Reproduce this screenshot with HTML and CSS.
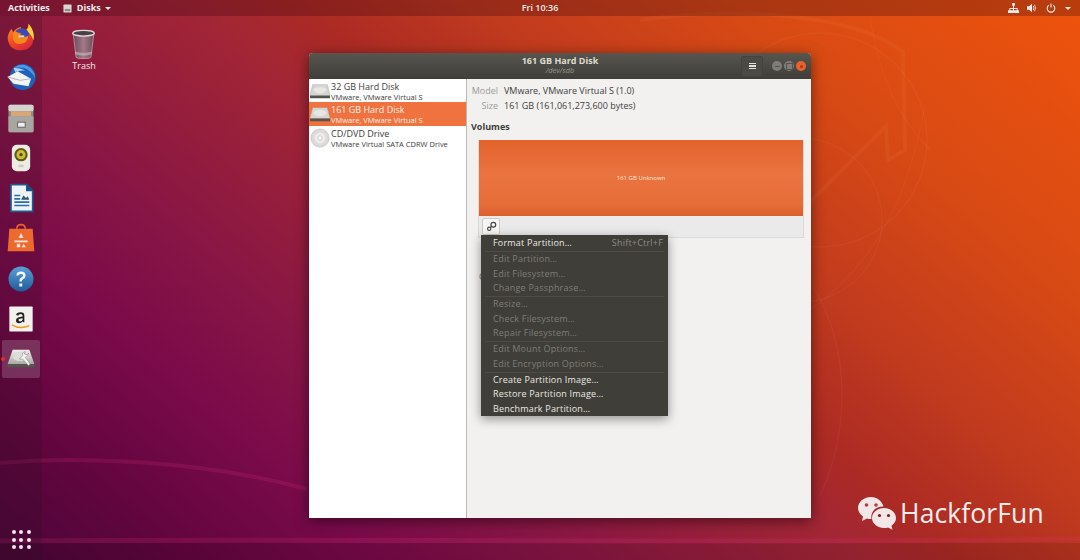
FILE: index.html
```html
<!DOCTYPE html>
<html lang="en">
<head>
<meta charset="utf-8">
<title>Disks</title>
<link rel="stylesheet" href="styles.css">
</head>
<body>
<div class="desktop">
  <svg class="wallpaper" viewBox="0 0 1080 560" preserveAspectRatio="none" aria-hidden="true">
    <rect x="0" y="543" width="1080" height="17" fill="#000" fill-opacity=".1"/>
    <g fill="none" stroke="#fff">
      <path d="M640 20 C720 8 850 10 903 52 L905 150 L888 160 L886 126 L812 200 L790 232" stroke="#f6a060" stroke-opacity=".09" stroke-width="4"/>
      <circle cx="820" cy="140" r="107" stroke-opacity=".04" stroke-width="1.500"/>
      <circle cx="800" cy="220" r="82" stroke-opacity=".035" stroke-width="1.500"/>
      <path d="M870 16 C880 80 900 120 930 150 M810 310 C880 260 910 190 925 105" stroke-opacity=".035" stroke-width="1.200"/>
      <path d="M815 290 C850 350 850 430 820 496" stroke-opacity=".035" stroke-width="1.500"/>
      <path d="M0 463 C80 456 200 460 307 489" stroke="#e0307a" stroke-opacity=".18" stroke-width="4"/>
      <path d="M0 541 C300 538 700 544 1080 539" stroke="#e0307a" stroke-opacity=".18" stroke-width="5"/>
    </g>
  </svg>

  <header class="topbar">
    <div class="topbar-left">
      <span>Activities</span>
      <span class="appmenu">
        <svg class="appmenu-icon" viewBox="0 0 10 10"><rect x=".5" y=".5" width="9" height="9" rx="1" fill="#d9d6d2"/><rect x="2" y="5.500" width="6" height="2.500" fill="#8f8b86"/></svg>
        Disks
        <i class="caret"></i>
      </span>
    </div>
    <div class="clock">Fri 10:36</div>
    <div class="status">
      <svg class="status-icon net" viewBox="0 0 12 12"><path fill="#eee" d="M4.500 0h3v3h-3zM5.500 3h1v2.500h4V8h1.500v3h-4V8h1.500V6.500H6.500V8H8v3H4V8h1.500V6.500H2.500V8H4v3H0V8h1.500V5.500h4z"/></svg>
      <svg class="status-icon" viewBox="0 0 12 12"><path fill="#eee" d="M0 4h2.500L6 1v10L2.500 8H0z"/><path fill="none" stroke="#eee" d="M7.500 3.500q1.500 2.500 0 5M9 2q2.500 4 0 8"/></svg>
      <svg class="status-icon power" viewBox="0 0 12 12"><path fill="none" stroke="#eee" stroke-width="1.300" d="M3.500 2.500a4.600 4.600 0 1 0 5 0M6 .5v5"/></svg>
      <i class="caret"></i>
    </div>
  </header>

  <aside class="dock">
    <div class="launcher">
      <svg class="dock-icon" viewBox="0 0 36 36"><defs><linearGradient id="fx" x1="0" y1="0" x2=".6" y2="1"><stop offset="0" stop-color="#ff9a2a"/><stop offset=".6" stop-color="#f2481f"/><stop offset="1" stop-color="#d92b3a"/></linearGradient></defs><path d="M27 2 q7 8 6 18 q-1 13 -15 14 q-14 0 -16 -14 q0 -7 5 -12 q0 3 2 4 q3 -5 9 -6 q-1 3 3 4 q5 1 6 -8z" fill="url(#fx)"/><path d="M27 2 q8 9 6 20 q-3 -8 -9 -12 q4 -3 3 -8z" fill="#ffd335"/><circle cx="19" cy="16" r="8.500" fill="#3b48b8"/><path d="M10 11 q6 2 9 3 q-3 2 -4 3 q2 2 6 1.500 q4 -1 6 -2 q-1 9 -10 10 q-8 0 -9 -8 q0 -5 2 -7.500z" fill="#f7861f"/><path d="M15 16h7v2.500h-7z" fill="#f9d8a0"/></svg>
    </div>
    <div class="launcher">
      <svg class="dock-icon" viewBox="0 0 36 36"><circle cx="20" cy="18" r="15.500" fill="#1c62bb"/><path d="M9 7 q12 -8 22 2 q4 5 4 10 q-6 -10 -14 -12 q-6 -1 -12 0z" fill="#4f9be3"/><path d="M9 7 q8 0 14 3 q-6 0 -12 2z" fill="#a9d2f4"/><path d="M2 18 L14 11 L30 20 L27 29 L9 26z" fill="#f4f4f4"/><path d="M2 18 L17 22 L30 20" fill="none" stroke="#b3b8c2" stroke-width="1.200"/></svg>
    </div>
    <div class="launcher">
      <svg class="dock-icon" viewBox="0 0 36 36"><rect x="3" y="2" width="30" height="33" rx="2" fill="#8d8a86"/><rect x="3" y="2" width="30" height="8" rx="2" fill="#d5d3cf"/><rect x="6" y="10" width="24" height="6" fill="#d8a778"/><rect x="3" y="16" width="30" height="19" rx="1" fill="#a9a6a2"/><rect x="14" y="23" width="9" height="6" fill="#efefef" stroke="#55524f"/></svg>
    </div>
    <div class="launcher">
      <svg class="dock-icon" viewBox="0 0 36 36"><rect x="7" y="2" width="22" height="32" rx="6" fill="#eeebe3"/><circle cx="18" cy="14" r="8" fill="#5e5a18"/><circle cx="18" cy="14" r="5.500" fill="#cdbb34"/><circle cx="18" cy="14" r="2" fill="#4e4a12"/><rect x="15" y="26" width="6" height="3" fill="#cfccc2"/></svg>
    </div>
    <div class="launcher">
      <svg class="dock-icon" viewBox="0 0 36 36"><path d="M5 1h20l8 8v26H5z" fill="#1d5c8f"/><path d="M7 3h17v7h7v23H7z" fill="#eef3f7"/><path d="M25 1l8 8h-8z" fill="#1a4f7c"/><path d="M10 14h7v2h-7zM10 18h7v2h-7zM10 22h18v2h-18zM10 26h18v2h-18z" fill="#2a6ea6"/><path d="M18 20l3-5 3 3 2-2 2 4z" fill="#33566f"/></svg>
    </div>
    <div class="launcher">
      <svg class="dock-icon" viewBox="0 0 36 36"><path d="M13 7q0-5 5-5t5 5" fill="none" stroke="#e8602c" stroke-width="2"/><path d="M4 7h28l2 27H2z" fill="#ed6a2f"/><path d="M18 12l3 6h-6zM10 21h16v2H10zM13 25h4v4h-4zM21 25l3 4h-5z" fill="#f8e4da"/></svg>
    </div>
    <div class="launcher">
      <svg class="dock-icon" viewBox="0 0 36 36"><defs><linearGradient id="hb" x1="0" y1="0" x2="0" y2="1"><stop offset="0" stop-color="#5aa0d8"/><stop offset="1" stop-color="#1f5c99"/></linearGradient></defs><circle cx="18" cy="18" r="15" fill="url(#hb)"/><path d="M12.500 14q0-5 5.500-5t5.500 5q0 3-3.500 4.500q-1 .6-1 2.500h-3q0-4 2.500-5q2-1 2-2.300q0-1.700-2.500-1.700t-2.500 1.500zM16 23.500h3.500V27H16z" fill="#f4f7fb"/></svg>
    </div>
    <div class="launcher">
      <svg class="dock-icon" viewBox="0 0 36 36"><rect x="4" y="3" width="28" height="30" rx="1" fill="#f2f1ee"/><path d="M22 22V14q0-4-4.500-4T12 13l2.500 1q.5-2 3-2t2.500 2v1q-8 .5-8 4.500q0 3.500 3.500 3.500q3 0 4.500-2l1 1z M20 17v2q-1 2-3 2t-2-2q0-2 5-2z" fill="#23211f"/><path d="M7 25q10 6 21 1" fill="none" stroke="#f39a1f" stroke-width="1.800"/></svg>
    </div>
    <div class="launcher is-active">
      <span class="running-dot"></span>
      <svg class="dock-icon" viewBox="0 0 36 36"><defs><linearGradient id="dk" x1="0" y1="0" x2="0" y2="1"><stop offset="0" stop-color="#f0efec"/><stop offset="1" stop-color="#a9a8a4"/></linearGradient></defs><path d="M8 7h20l6 17H2z" fill="url(#dk)"/><path d="M2 24h32v4H2z" fill="#55544f"/><ellipse cx="17" cy="15" rx="9" ry="5.500" fill="#dddcd8"/><path d="M16 18l4-4q-1-4 3-5l-1 3 3 1 2-2q0 4-4 5l6 8-2 2-7-8z" fill="#f6f5f3" stroke="#777" stroke-width=".6"/></svg>
    </div>
    <div class="dock-spacer"></div>
    <div class="app-grid">
      <i></i><i></i><i></i><i></i><i></i><i></i><i></i><i></i><i></i>
    </div>
  </aside>

  <div class="desktop-item">
    <svg class="trash" viewBox="0 0 26 32"><defs><linearGradient id="tb" x1="0" y1="0" x2="1" y2="0"><stop offset="0" stop-color="#6d4a58"/><stop offset=".5" stop-color="#a27a88"/><stop offset="1" stop-color="#6f4b5a"/></linearGradient></defs><path d="M2 5l3 25q0 1.500 8 1.500t8-1.500l3-25z" fill="url(#tb)" stroke="#cfc8ca" stroke-width=".6"/><ellipse cx="13" cy="4.500" rx="11.500" ry="3" fill="#4a4046" stroke="#e1dddd" stroke-width="1.400"/><path d="M4 24q9 3 18 0v3q-9 3-18 0z" fill="#c8bcc0" opacity=".6"/></svg>
    <span>Trash</span>
  </div>

  <section class="window">
    <div class="titlebar">
      <div class="title">
        <strong>161 GB Hard Disk</strong>
        <em>/dev/sdb</em>
      </div>
      <div class="title-actions">
        <button class="hamburger" type="button"><i></i><i></i><i></i></button>
        <div class="wm-buttons">
          <b class="wm wm-min"></b><b class="wm wm-max"></b><b class="wm wm-close"></b>
        </div>
      </div>
    </div>
    <div class="window-body">
      <nav class="sidebar">
        <div class="disk">
          <svg class="disk-icon" viewBox="0 0 22 18"><path d="M3 2h16l3 12H0z" fill="#d6d5d2" stroke="#a3a29f" stroke-width=".5"/><path d="M0 14h22v3H0z" fill="#55544f"/><ellipse cx="11" cy="8" rx="7" ry="3.500" fill="#e8e7e4"/></svg>
          <div class="disk-text"><span class="disk-name">32 GB Hard Disk</span><span class="disk-sub">VMware, VMware Virtual S</span></div>
        </div>
        <div class="disk is-selected">
          <svg class="disk-icon" viewBox="0 0 22 18"><path d="M3 2h16l3 12H0z" fill="#d6d5d2" stroke="#a3a29f" stroke-width=".5"/><path d="M0 14h22v3H0z" fill="#55544f"/><ellipse cx="11" cy="8" rx="7" ry="3.500" fill="#e8e7e4"/></svg>
          <div class="disk-text"><span class="disk-name">161 GB Hard Disk</span><span class="disk-sub">VMware, VMware Virtual S</span></div>
        </div>
        <div class="disk">
          <svg class="disk-icon" viewBox="0 0 22 22"><circle cx="11" cy="11" r="10" fill="#dcdbd8" stroke="#b5b4b1" stroke-width=".6"/><circle cx="11" cy="11" r="6" fill="#eeedeb"/><circle cx="11" cy="11" r="2.500" fill="#fff" stroke="#aaa" stroke-width=".6"/></svg>
          <div class="disk-text"><span class="disk-name">CD/DVD Drive</span><span class="disk-sub">VMware Virtual SATA CDRW Drive</span></div>
        </div>
      </nav>
      <main class="details">
        <dl class="props">
          <dt>Model</dt><dd>VMware, VMware Virtual S (1.0)</dd>
          <dt>Size</dt><dd>161 GB (161,061,273,600 bytes)</dd>
        </dl>
        <h2 class="volumes-title">Volumes</h2>
        <div class="volumes">
          <div class="partition"><span>161 GB Unknown</span></div>
          <div class="vol-toolbar">
            <button class="gear-btn" type="button">
              <svg viewBox="0 0 12 12"><circle cx="8" cy="4" r="2.600" fill="none" stroke="#444" stroke-width="1.300"/><circle cx="3.500" cy="8.500" r="1.800" fill="none" stroke="#444" stroke-width="1.200"/><path d="M6 6L5 7" stroke="#444" stroke-width="1.300"/></svg>
            </button>
          </div>
        </div>
        <div class="contents-label">Contents</div>
        <div class="menu">
          <div class="menu-item"><span>Format Partition…</span><span class="shortcut">Shift+Ctrl+F</span></div>
          <hr>
          <div class="menu-item is-disabled">Edit Partition…</div>
          <div class="menu-item is-disabled">Edit Filesystem…</div>
          <div class="menu-item is-disabled">Change Passphrase…</div>
          <hr>
          <div class="menu-item is-disabled">Resize…</div>
          <div class="menu-item is-disabled">Check Filesystem…</div>
          <div class="menu-item is-disabled">Repair Filesystem…</div>
          <hr>
          <div class="menu-item is-disabled">Edit Mount Options…</div>
          <div class="menu-item is-disabled">Edit Encryption Options…</div>
          <hr>
          <div class="menu-item">Create Partition Image…</div>
          <div class="menu-item">Restore Partition Image…</div>
          <div class="menu-item">Benchmark Partition…</div>
        </div>
      </main>
    </div>
  </section>

  <div class="watermark">
    <svg class="wechat" viewBox="0 0 40 34"><path d="M14 1C6.500 1 1 6 1 12c0 3.500 2 6.500 5 8.500L5 25l5-2.500c1.500.4 3 .6 4.500.5C13 16 19 10 26.500 10.500 25 5 20 1 14 1z" fill="#f3e6e6"/><path d="M27 12c-6.500 0-12 4.500-12 10s5.500 10 12 10c1.500 0 2.700-.2 4-.6l4.500 2.300-1-4c2.800-2 4.500-4.700 4.500-7.700 0-5.500-5.500-10-12-10z" fill="#f3e6e6"/><circle cx="9.500" cy="9" r="1.800" fill="#b93a3a"/><circle cx="19" cy="9" r="1.800" fill="#b93a3a"/><circle cx="22.500" cy="19.500" r="1.600" fill="#7a2020"/><circle cx="31.500" cy="19.500" r="1.600" fill="#7a2020"/></svg>
    <span>HackforFun</span>
  </div>
</div>
</body>
</html>
```
FILE: styles.css
```css
* { box-sizing: border-box; }
html, body { margin: 0; height: 100%; overflow: hidden; }
body { font-family: "Open Sans", "Noto Sans", sans-serif; color: #3d3d3a; }

.desktop {
  position: relative;
  width: 1080px;
  height: 560px;
  overflow: hidden;
  background: linear-gradient(40deg,
    #4a0638 0%, #62053f 11%, #7a0a4a 22%, #871545 32%,
    #a32634 49.500%, #ab2a24 55%, #c03a1e 65%, #d84a14 80%, #ee530c 100%);
}
.wallpaper { position: absolute; inset: 0; width: 100%; height: 100%; }

/* top bar */
.topbar {
  position: relative;
  height: 16px;
  padding: 0 8px;
  display: grid;
  grid-template-columns: 1fr auto 1fr;
  align-items: center;
  background: rgba(50, 5, 15, .28);
  color: #eee;
  font-size: 9px;
  font-weight: 700;
  line-height: 16px;
  z-index: 2;
}
.topbar-left { display: flex; gap: 13px; }
.appmenu { display: inline-flex; align-items: center; gap: 4px; }
.appmenu-icon { width: 9px; height: 9px; margin-right: 1px; }
.clock { font-weight: 600; }
.status { justify-self: end; display: flex; align-items: center; gap: 8px; padding-right: 1px; }
.status-icon { width: 10px; height: 10px; }
.net { width: 11px; height: 11px; }
.power { margin-left: 1px; margin-right: 1px; }
.caret {
  display: inline-block;
  width: 0; height: 0;
  border: 3px solid transparent;
  border-top: 3.500px solid #eee;
  border-bottom: 0;
}

/* dock */
.dock {
  position: absolute;
  top: 16px;
  bottom: 0;
  left: 0;
  width: 42px;
  display: flex;
  flex-direction: column;
  align-items: center;
  padding-top: 2px;
  background: rgba(40, 15, 30, .2);
}
.launcher {
  position: relative;
  width: 38px;
  height: 38px;
  margin-bottom: 2.300px;
  flex: none;
  display: flex;
  align-items: center;
  justify-content: center;
}
.is-active { background: rgba(255, 255, 255, .17); border-radius: 2px; }
.running-dot {
  position: absolute;
  left: -1px; top: 17px;
  width: 4px; height: 4px;
  border-radius: 50%;
  background: #e0302a;
}
.dock-icon { width: 30px; height: 30px; display: block; }
.dock-spacer { flex: 1; }
.app-grid {
  display: grid;
  grid-template-columns: repeat(3, 4px);
  gap: 3.500px;
  margin-bottom: 11px;
}
.app-grid i { width: 4px; height: 4px; border-radius: 50%; background: #f6e4f0; }

/* desktop icon */
.desktop-item {
  position: absolute;
  left: 62px;
  top: 29px;
  width: 44px;
  display: flex;
  flex-direction: column;
  align-items: center;
  color: #f0ecec;
  font-size: 9px;
  line-height: 14px;
}
.trash { width: 25px; height: 30px; display: block; margin-left: -2px; }

/* window */
.window {
  position: absolute;
  left: 309px;
  top: 53px;
  width: 502px;
  height: 465px;
  display: flex;
  flex-direction: column;
  border-radius: 4px 4px 0 0;
  box-shadow: 0 3px 14px rgba(0, 0, 0, .5);
  background: #f2f1f0;
}
.titlebar {
  position: relative;
  height: 26px;
  flex: none;
  display: flex;
  justify-content: center;
  background: linear-gradient(#57554e, #3f3e39);
  border-radius: 4px 4px 0 0;
  color: #dfdbd2;
}
.title { display: flex; flex-direction: column; align-items: center; padding-top: 3px; }
.title strong { font-size: 9px; line-height: 10px; font-weight: 700; }
.title em { font-size: 7.500px; line-height: 9px; color: #98958c; }
.title-actions {
  position: absolute;
  right: 0;
  top: 0;
  height: 26px;
  display: flex;
  align-items: center;
  gap: 9px;
  padding-right: 5px;
}
.hamburger {
  width: 22px;
  height: 21px;
  padding: 0;
  display: flex;
  flex-direction: column;
  align-items: center;
  justify-content: center;
  gap: 1.500px;
  background: #4c4a44;
  border: 1px solid #45433d;
  border-radius: 2px;
}
.hamburger i { width: 7px; height: 1.300px; background: #e4e1da; }
.wm-buttons { display: flex; gap: 2px; }
.wm {
  position: relative;
  width: 10px;
  height: 10px;
  border-radius: 50%;
  background: #7f7d76;
  display: flex;
  align-items: center;
  justify-content: center;
}
.wm-close { background: #e9602c; }
.wm-min::after { content: ""; width: 5px; height: 1px; background: #55534d; }
.wm-max::after { content: ""; width: 5px; height: 5px; border: 1px solid #55534d; }
.wm-close::after { content: ""; width: 3px; height: 3px; background: #a83a14; border-radius: 50%; }

.window-body { flex: 1; display: flex; min-height: 0; }
.sidebar {
  width: 158px;
  flex: none;
  background: #fff;
  border-right: 1px solid #bdbab5;
  font-size: 9px;
}
.disk { height: 24px; display: flex; align-items: center; gap: 1px; padding-left: 1px; color: #3d3d3a; }
.disk:first-child { height: 23px; }
.disk.is-selected { background: #f0733f; color: #fdeee7; }
.disk-icon { width: 20px; height: 20px; flex: none; }
.disk-text { display: flex; flex-direction: column; margin-top: 2px; }
.disk-name { font-size: 9px; line-height: 10px; }
.disk-sub { font-size: 7.500px; line-height: 10px; }

.details { position: relative; flex: 1; padding: 4px 7px 0 4px; font-size: 9px; min-width: 0; }
.props {
  margin: 0;
  display: grid;
  grid-template-columns: 27px 1fr;
  column-gap: 6px;
  row-gap: 0;
  line-height: 15px;
}
.props dt { text-align: right; color: #9b9a97; }
.props dd { margin: 0; }
.volumes-title { margin: 7px 0 7px; font-size: 9px; line-height: 13px; font-weight: 700; }
.volumes { margin-left: 7px; background: #ebeaea; border: 1px solid #dbd9d7; border-top: 0; }
.partition {
  height: 76px;
  display: flex;
  align-items: center;
  justify-content: center;
  background: linear-gradient(#e3622b, #ea7440 45%, #e66d38 85%, #d9602c);
  color: #fbe9df;
  font-size: 6px;
}
.vol-toolbar { height: 21px; padding: 2px 3px; }
.gear-btn {
  width: 18px;
  height: 17px;
  padding: 2px;
  display: flex;
  align-items: center;
  justify-content: center;
  background: #f7f6f5;
  border: 1px solid #cdcbc8;
  border-radius: 2px;
}
.gear-btn svg { width: 11px; height: 11px; }
.contents-label {
  margin: 33px 0 0 8px;
  color: #777;
  line-height: 12px;
}

.menu {
  position: absolute;
  left: 14px;
  top: 156px;
  width: 187px;
  height: 181px;
  padding: 0;
  background: #3f3e39;
  color: #ece9e2;
  font-size: 9px;
  letter-spacing: .2px;
  box-shadow: 0 3px 10px rgba(0, 0, 0, .4);
}
.menu-item {
  height: 14.600px;
  padding: 0 5px 0 12px;
  line-height: 14.600px;
  display: flex;
  justify-content: space-between;
  white-space: nowrap;
}
.menu-item:first-child { margin-top: 1px; }
.menu-item.is-disabled { color: #7f7d76; }
.shortcut { color: #8f8c85; }
.menu hr { margin: .200px 4px; border: 0; border-top: 1px solid #4c4b45; }

/* watermark */
.watermark {
  position: absolute;
  left: 857px;
  top: 495px;
  display: flex;
  align-items: center;
  gap: 3px;
  color: #f6ecec;
  font-size: 26.500px;
  line-height: 36px;
  letter-spacing: .1px;
}
.wechat { width: 40px; height: 34px; }
```
